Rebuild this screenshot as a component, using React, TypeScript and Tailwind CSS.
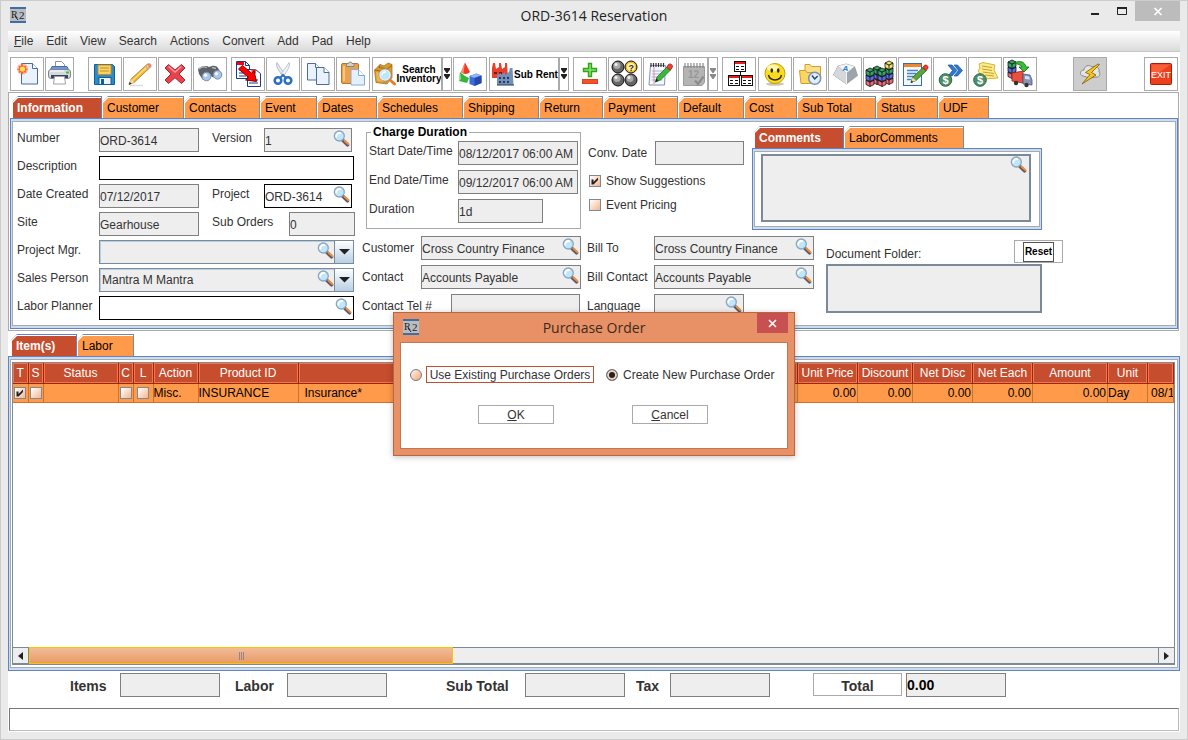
import { useState, type ReactNode } from 'react'

const MENUS = ['File', 'Edit', 'View', 'Search', 'Actions', 'Convert', 'Add', 'Pad', 'Help']

const MAIN_TABS = [
  { label: 'Information', width: 'w-[90px]' },
  { label: 'Customer', width: 'w-[82px]' },
  { label: 'Contacts', width: 'w-[76px]' },
  { label: 'Event', width: 'w-[57px]' },
  { label: 'Dates', width: 'w-[60px]' },
  { label: 'Schedules', width: 'w-[86px]' },
  { label: 'Shipping', width: 'w-[76px]' },
  { label: 'Return', width: 'w-[64px]' },
  { label: 'Payment', width: 'w-[75px]' },
  { label: 'Default', width: 'w-[66px]' },
  { label: 'Cost', width: 'w-[53px]' },
  { label: 'Sub Total', width: 'w-[79px]' },
  { label: 'Status', width: 'w-[62px]' },
  { label: 'UDF', width: 'w-[51px]' },
]

const COLUMNS = [
  { label: 'T', width: 'w-[15px]' },
  { label: 'S', width: 'w-[15px]' },
  { label: 'Status', width: 'w-[75px]' },
  { label: 'C', width: 'w-[15px]' },
  { label: 'L', width: 'w-[20px]' },
  { label: 'Action', width: 'w-[45px]' },
  { label: 'Product ID', width: 'w-[100px]' },
  { label: '', width: '' },
  { label: 'Unit Price', width: 'w-[60px]' },
  { label: 'Discount', width: 'w-[55px]' },
  { label: 'Net Disc', width: 'w-[60px]' },
  { label: 'Net Each', width: 'w-[60px]' },
  { label: 'Amount', width: 'w-[75px]' },
  { label: 'Unit', width: 'w-[40px]' },
  { label: '', width: 'w-[26px]' },
]

/* ---------- icons ---------- */

function Icon({ w = 32, children }: { w?: number; children: ReactNode }) {
  return (
    <svg width={w} height={32} viewBox={`0 0 ${w} 32`} fill="none" className="shrink-0" aria-hidden="true">
      {children}
    </svg>
  )
}

function R2Logo() {
  return (
    <svg width={16} height={16} viewBox="0 0 16 16" className="shrink-0" aria-hidden="true">
      <rect width="16" height="16" fill="#b9bcc0" />
      <rect width="16" height="2" fill="#3c6fa6" />
      <rect y="14" width="16" height="2" fill="#3c6fa6" />
      <text x="1" y="11" fontSize="10" fontFamily="Liberation Serif, serif" fill="#1c1c1c">R</text>
      <text x="9" y="12" fontSize="11" fontFamily="Liberation Serif, serif" fill="#1c1c1c">2</text>
      <path d="M5 9l3 4" stroke="#1c1c1c" strokeWidth="1" />
    </svg>
  )
}

function Magnifier() {
  return (
    <svg width={17} height={17} viewBox="0 0 17 17" fill="none" aria-hidden="true">
      <path d="M10 10.5l4.500 4.300" stroke="#5f5a6e" strokeWidth="3.600" strokeLinecap="round" />
      <path d="M11.500 10.500l3.800 3.600" stroke="#f0913a" strokeWidth="2" strokeLinecap="round" />
      <circle cx="6.300" cy="6" r="5" fill="#bfe6fb" stroke="#8ea6bd" strokeWidth="1.300" />
      <path d="M3.300 6.500a3.200 3.200 0 0 1 4-3.400" stroke="#fff" strokeWidth="1.800" strokeLinecap="round" />
    </svg>
  )
}

const Page = ({ d }: { d: string }) => <path d={d} fill="#e9f2fd" stroke="#4a6ba3" strokeWidth="1" />

const NewIcon = () => (
  <Icon>
    <Page d="M10.5 5.5h11l5 5v15.500h-16z" />
    <path d="M21.500 5.500v5h5" fill="#fff" stroke="#4a6ba3" />
    <circle cx="11.500" cy="11" r="5.500" fill="#ff8a5c" opacity=".55" />
    <path d="M11.500 6l1.200 2.600 2.800-1-1 2.800 2.600.8-2.600 1.200 1 2.600-2.800-.9-1.200 2.500-1.200-2.500-2.800.9 1-2.600-2.600-1.200 2.600-.8L7.500 7.600l2.800 1z" fill="#f5622a" />
    <circle cx="11.500" cy="11" r="2.600" fill="#ffe34a" />
  </Icon>
)

const PrintIcon = () => (
  <Icon w={27}>
    <path d="M9.500 10V3.500h6l3 3V10z" fill="#fff" stroke="#8a93a3" />
    <path d="M6 8.500h15l2 4H4z" fill="#6f98d6" stroke="#4a6aa0" />
    <rect x="2.500" y="11.500" width="22" height="9" rx="2.500" fill="#d5d9e0" stroke="#7d8594" />
    <path d="M5 17h17v3H5z" fill="#3d4452" />
    <path d="M8.500 18.500h10l1 7.500h-12z" fill="#fff" stroke="#9aa2af" />
    <path d="M20 14.500h3" stroke="#39c629" strokeWidth="2" />
    <path d="M4 13h14" stroke="#fff" />
  </Icon>
)

const SaveIcon = () => (
  <Icon>
    <path d="M5.500 6.500h18l2 2v18h-20z" fill="#2a8ccd" stroke="#125d9b" />
    <rect x="9" y="7" width="13" height="9.500" fill="#fbd266" stroke="#c98d1c" />
    <path d="M11 10h9M11 13h9" stroke="#c98d1c" />
    <rect x="10" y="19.500" width="12" height="7" fill="#eef3f8" stroke="#125d9b" />
    <rect x="12" y="21" width="3" height="5" fill="#125d9b" />
  </Icon>
)

const PencilIcon = () => (
  <Icon>
    <path d="M6 27.500h13" stroke="#ddd" strokeWidth="1.500" />
    <path d="M5 26.500l2-5.500L23.500 6l3 3L10 24.500z" fill="#fbb62b" stroke="#a4722c" strokeWidth=".8" />
    <path d="M8.500 22.500L24.500 7.500" stroke="#ffe38a" strokeWidth="1.300" />
    <path d="M5 26.500l2-5.500 3 3.500z" fill="#f5dab4" />
    <path d="M4.800 26.800l1-2.800 1.800 1.800z" fill="#222" />
    <path d="M23 6.500l1-1c1.500-1 4.500 1.500 3.300 3.200l-1 1z" fill="#ee8474" />
    <path d="M21.500 8l3 3" stroke="#b5b5b5" strokeWidth="1.600" />
  </Icon>
)

const DeleteIcon = () => (
  <Icon>
    <path d="M9.500 6.500l6.500 5.500 6.500-5.500 3.500 3.500-6 6 6 6-3.500 3.500-6.500-5.800-6.500 5.800L6 22l6-6-6-6z" fill="#e8424d" stroke="#b3202c" strokeLinejoin="round" />
    <path d="M9.500 8.500l6.500 5.500 6.500-5.500" stroke="#ff9aa0" strokeWidth="1.500" />
  </Icon>
)

const BinocularsIcon = () => (
  <Icon>
    <path d="M4 11c1-2 5-3.500 9-3l2 1 3-1c3-.5 5 .5 6 2l4 7-4 3-6-1-2-3-2 5-5 1-4-6z" fill="#5d6167" />
    <path d="M5 11c2-2 5-2.500 8-1.500M18 9.500l4 1" stroke="#b4b8bd" strokeWidth="1.300" />
    <circle cx="12.500" cy="18.500" r="4.300" fill="#a5c8f0" stroke="#7d8da2" />
    <circle cx="23.500" cy="16.800" r="4.300" fill="#a5c8f0" stroke="#7d8da2" />
    <circle cx="11.500" cy="17.300" r="1.700" fill="#f2f8ff" />
    <circle cx="22.500" cy="15.700" r="1.700" fill="#f2f8ff" />
  </Icon>
)

const TransferIcon = () => (
  <Icon>
    <path d="M4.500 3.500h9l4 4v13h-13z" fill="#fff" stroke="#173a8c" />
    <path d="M13.500 3.500v4h4" stroke="#173a8c" />
    <path d="M5 4h7v3H5z" fill="#f00" />
    <path d="M7 12h4M7 15h5M7 18h7" stroke="#173a8c" />
    <path d="M15.500 11.500h8l5 4v13h-13z" fill="#fff" stroke="#173a8c" />
    <path d="M19 11.500h5v4h-4z" fill="#f44" />
    <path d="M17 19h3M17 22h9M17 25h9" stroke="#173a8c" />
    <path d="M6.500 11l4-3.500 9.500 8 2-3 2.500 11-11-1.500 3-2.500z" fill="#f00" stroke="#600" strokeWidth=".9" />
  </Icon>
)

const CutIcon = () => (
  <Icon>
    <path d="M10 4.500c-2 3 2 9 6 14l2-2.500C15 12 12 8 10 4.500z" fill="#e3e6ea" stroke="#aeb4bb" strokeWidth=".8" />
    <path d="M22 4.500c2 3-2 9-6 14l-2-2.500c3-4 6-8 8-11.500z" fill="#f3f4f6" stroke="#aeb4bb" strokeWidth=".8" />
    <circle cx="11" cy="22.500" r="3.300" stroke="#2d6fc2" strokeWidth="2.600" />
    <circle cx="21" cy="22.500" r="3.300" stroke="#2d6fc2" strokeWidth="2.600" />
    <path d="M13 20l3-3 3 3" stroke="#2d6fc2" strokeWidth="2" />
  </Icon>
)

const CopyIcon = () => (
  <Icon>
    <Page d="M5.500 5.500h8l4 4v12.500h-12z" />
    <path d="M13.500 5.500v4h4" fill="#fff" stroke="#4a6ba3" />
    <Page d="M14.500 9.500h7.500l5 5v12h-12.500z" />
    <path d="M22 9.500v5h5" fill="#fff" stroke="#4a6ba3" />
  </Icon>
)

const PasteIcon = () => (
  <Icon>
    <rect x="4.500" y="5.500" width="17" height="20" rx="1.500" fill="#eda24a" stroke="#b8752a" />
    <path d="M7 8v15" stroke="#f8c888" strokeWidth="2" />
    <path d="M9.500 8.500v-3h2c0-2 3.500-2 3.500 0h2v3z" fill="#d5d2cd" stroke="#86827c" />
    <path d="M14 11.500h7.500l6 6v9.500H14z" fill="#e4f1fd" stroke="#86abd8" />
    <path d="M21.500 11.500v6h6" fill="#fff" stroke="#86abd8" />
  </Icon>
)

const InventoryIcon = () => (
  <Icon w={24}>
    <path d="M1.500 12L7 6.500l4 1.500 4-3 4 1.500v13L14 26l-11-1.500z" fill="#d99a2b" stroke="#a8721c" strokeWidth=".8" />
    <path d="M1.500 12l9 1.500 8.500-6M7 6.500l-1 3 6 1" stroke="#8f5d12" strokeWidth=".8" />
    <path d="M3 14l7 1v9l-6-1z" fill="#f0b94a" />
    <path d="M16 21l5.500 5" stroke="#ec7a2c" strokeWidth="3" strokeLinecap="round" />
    <circle cx="12" cy="17" r="5.300" fill="#bde7f6" stroke="#e8eef2" strokeWidth="1.600" />
    <circle cx="12" cy="17" r="6.200" stroke="#7d97a8" strokeWidth=".7" />
    <path d="M9 17.500a3.300 3.300 0 0 1 4-3.500" stroke="#fff" strokeWidth="1.600" />
  </Icon>
)

const ShapesIcon = () => (
  <Icon>
    <path d="M11 4.500l5 9.500c-2 2.500-7 2.500-9 0z" fill="#ee3a22" />
    <path d="M11 4.500L9.500 15c-1 0-2-.5-2.500-1z" fill="#ff9076" />
    <path d="M6 14l5 4 4 2-2 5-8-2z" fill="#35b53a" />
    <path d="M6 14l1 7-2 2z" fill="#9be39a" />
    <path d="M15.500 18l7-2.500 5 2v7.500l-7 3-5-2z" fill="#3a6cdb" />
    <path d="M15.500 18l7-2.500 5 2-7 2.500z" fill="#8fb2ff" />
    <path d="M20.500 20v8l7-3v-7.500z" fill="#2449a8" />
  </Icon>
)

const FactoryIcon = () => (
  <Icon w={24}>
    <path d="M2 20V10l1-5h2l1 6 3-2 0-4h2l1 6 3-2V5h2l1 15z" fill="#e8402a" />
    <path d="M4 15h3M9 15h3" stroke="#7d1709" strokeWidth="2" />
    <path d="M7 27V17l4-2v2l4-3v3l4-3 1-4h2.500l1 17z" fill="#7391b8" />
    <path d="M9 20h2M13 20h2M17 20h2M9 24h2M13 24h2M17 24h2" stroke="#24395a" strokeWidth="2" />
    <path d="M7 27h17" stroke="#24395a" />
  </Icon>
)

const PlusMinusIcon = () => (
  <Icon>
    <path d="M14.500 5.500h3v5h5v3h-5v5h-3v-5h-5v-3h5z" fill="#8be06c" stroke="#2fa51b" strokeWidth="1.400" />
    <rect x="8.500" y="21.500" width="15" height="4" fill="#f4512b" stroke="#e0401c" />
  </Icon>
)

const BallsIcon = () => (
  <Icon>
    {[[9, 9], [9, 22], [22, 22]].map(([x, y]) => (
      <g key={`${x}-${y}`}>
        <circle cx={x} cy={y} r="6" fill="#666" stroke="#111" />
        <circle cx={x - 1} cy={y - 1.5} r="3.500" fill="#a9a9a9" />
        <circle cx={x - 2} cy={y - 2.5} r="1.600" fill="#eee" />
      </g>
    ))}
    <circle cx="22" cy="9" r="6" fill="#f3b91e" stroke="#111" />
    <circle cx="22" cy="9" r="4" fill="#fff0b0" />
    <text x="19.500" y="12.500" fontSize="9" fontWeight="bold" fontFamily="Liberation Sans, sans-serif" fill="#333">?</text>
  </Icon>
)

const NoteIcon = () => (
  <Icon>
    <path d="M6.500 7.500h15l-1 19.500H5z" fill="#f5f8ff" stroke="#8193b8" />
    <path d="M8 13h12M8 16h11M7.500 19h12M7.500 22h11" stroke="#9fb4e0" />
    <path d="M10 9v17" stroke="#f08a8a" />
    <path d="M7 5v4M9.500 5v4M12 5v4M14.500 5v4M17 5v4M19.500 5v4" stroke="#333" strokeWidth="1.200" />
    <path d="M11.500 24l1.500-5L23 9l3.500 3-10 10z" fill="#3fb53a" stroke="#1d7a1a" strokeWidth=".8" />
    <path d="M22.500 9.500l2-3c2-1.500 4.500.5 4 2.500L26.500 12z" fill="#ef3d34" stroke="#a81b14" strokeWidth=".8" />
    <path d="M11 24.500l1.500-4 2 2z" fill="#222" />
  </Icon>
)

const CalendarIcon = () => (
  <Icon w={27}>
    <path d="M3.500 8.500h21v16l-2.500 3h-18.500z" fill="#b4b4b4" stroke="#9c9c9c" />
    <path d="M5 5v5M8 5v5M11 5v5M14 5v5M17 5v5M20 5v5M23 5v5" stroke="#888" strokeWidth="1.200" />
    <text x="8" y="20" fontSize="10" fontWeight="bold" fontFamily="Liberation Sans, sans-serif" fill="#989898">12</text>
    <path d="M15 22.500l3 3.500 5.500-7.500" stroke="#8c8c8c" strokeWidth="2.200" />
  </Icon>
)

const OrgIcon = () => (
  <Icon>
    <path d="M17.500 14v3M10.500 17.500h13M10.500 17v2M23.500 17v2" stroke="#111" />
    {[[11, 3], [5, 17], [18, 17]].map(([x, y]) => (
      <g key={x}>
        <rect x={x + 0.5} y={y + 0.5} width="11" height="10" fill="#fff" stroke="#111" />
        <rect x={x + 1} y={y + 1} width="10" height="2" fill="#ee1c1c" />
        <path d={`M${x + 2} ${y + 5.5}h3M${x + 7} ${y + 5.5}h3M${x + 2} ${y + 8.5}h3M${x + 7} ${y + 8.5}h3`} stroke="#111" />
      </g>
    ))}
  </Icon>
)

const SmileIcon = () => (
  <Icon>
    <ellipse cx="16" cy="26" rx="9" ry="1.800" fill="#c9c9b0" />
    <circle cx="16" cy="15.500" r="10" fill="#f9dc20" stroke="#c59a0a" />
    <ellipse cx="14" cy="10" rx="6" ry="3.500" fill="#fff8a8" />
    <ellipse cx="12.800" cy="12.500" rx="1.300" ry="2.300" fill="#3b2a00" />
    <ellipse cx="19.200" cy="12.500" rx="1.300" ry="2.300" fill="#3b2a00" />
    <path d="M9.500 17c1.500 6.500 11.500 6.500 13 0" stroke="#3b2a00" strokeWidth="1.500" />
  </Icon>
)

const FolderClockIcon = () => (
  <Icon>
    <path d="M11 9V6.500h5l1.500 2h9V22H11z" fill="#fbe08b" stroke="#d59b27" />
    <path d="M5.500 12.500h6l1.500 2h8v11h-14z" fill="#fcd665" stroke="#d59b27" />
    <circle cx="20.700" cy="20.300" r="6" fill="#dff0fc" stroke="#7c93ad" strokeWidth="1.600" />
    <path d="M18 17.500l2.700 3.500 3-3" stroke="#24426e" strokeWidth="1.400" />
  </Icon>
)

const KeyIcon = () => (
  <Icon>
    <path d="M4.500 17L9 8l8-2 8.500 2.500 3 9L17.500 26z" fill="#9ea4ac" stroke="#8a9099" strokeWidth=".7" />
    <path d="M9 8l8-2 8.500 2.500-8 6.500z" fill="#f4f6f8" />
    <path d="M4.500 17L9 8l8.500 7v11z" fill="#d4d8dd" />
    <path d="M17.500 15v11" stroke="#f4f6f8" />
    <text x="13.500" y="13" fontSize="8" fontWeight="bold" fontStyle="italic" fontFamily="Liberation Sans, sans-serif" fill="#2a7fd4">A</text>
  </Icon>
)

// columns of crates, drawn from the bottom one up
const Stack = ({ x, y, layers }: { x: number; y: number; layers: string[] }) => (
  <g stroke="#111" strokeWidth=".8" strokeLinejoin="round">
    {layers.map((c, i) => {
      const top = y - i * 5
      return (
        <g key={i} fill={c}>
          <path d={`M${x} ${top}l4 2 4-2v4.500l-4 2-4-2z`} />
          <path d={`M${x} ${top}l4-2 4 2-4 2z`} />
          <path d={`M${x + 4} ${top + 2}v4.500`} />
        </g>
      )
    })}
  </g>
)

const RED = '#ee6b78'
const BLUE = '#5a6fe8'
const GREEN = '#35a868'
const YELLOW = '#f5e06a'

const BlocksIcon = () => (
  <Icon>
    <Stack x={9} y={20} layers={[RED, BLUE, GREEN]} />
    <Stack x={21} y={20} layers={[RED, BLUE, GREEN, YELLOW]} />
    <Stack x={2} y={22} layers={[RED, BLUE, GREEN]} />
    <Stack x={14} y={22} layers={[RED, BLUE, GREEN]} />
  </Icon>
)

const EditDocIcon = () => (
  <Icon>
    <rect x="4.500" y="5.500" width="18" height="22" fill="#f4f9fe" stroke="#2f6fb3" />
    <path d="M5 6h17v3H5z" fill="#f2862a" />
    <path d="M8 12.500h11M8 15.500h9M8 18.500h7M8 21.500h4" stroke="#4585c6" strokeWidth="1.400" />
    <path d="M12 24.500l1.500-5L24 9.500l3.500 3L17 22.500z" fill="#5aa83c" stroke="#2b5d18" strokeWidth=".8" />
    <path d="M23.500 9.800l2-2.500c2-1 4 .8 3.500 2.700l-1.800 2.500z" fill="#ee3d34" stroke="#a81b14" strokeWidth=".8" />
    <path d="M12 24.500l1.500-5L17 22.500z" fill="#f3d9ae" />
    <path d="M11.800 25l.8-2.400 1.600 1.500z" fill="#111" />
  </Icon>
)

const Coin = ({ x, y }: { x: number; y: number }) => (
  <g>
    <circle cx={x} cy={y} r="6.300" fill="#4f8e68" stroke="#2f6848" />
    <text x={x - 3} y={y + 4} fontSize="11" fontWeight="bold" fontFamily="Liberation Sans, sans-serif" fill="#fff">$</text>
  </g>
)

const MoneyArrowIcon = () => (
  <Icon>
    <path d="M14 7h4l5 5.500-5 5.500h-4l4.500-5.500z" fill="#2d78d0" stroke="#1b539b" strokeWidth=".7" />
    <path d="M20 7h3.500l5 5.500-5 5.500H20l4.500-5.500z" fill="#2d78d0" stroke="#1b539b" strokeWidth=".7" />
    <Coin x={11.5} y={22} />
  </Icon>
)

const MoneyNoteIcon = () => (
  <Icon>
    <path d="M10 6l4-1.500 12 2.500-1 5 4 8-14 1-6-8 2-3z" fill="#fbeb8a" stroke="#d5b53a" />
    <path d="M13 8l10 1.500M13 11l10 1.500M14 14l11 1.500M16 17l9 1" stroke="#c7a02b" />
    <Coin x={11} y={22} />
  </Icon>
)

const TruckIcon = () => (
  <Icon>
    <Stack x={4} y={14} layers={[RED, BLUE, GREEN]} />
    <path d="M10 5c6-3 11-1 12 4h3l-5 5-5-5h3c-1-2-4-3-8-4z" fill="#35c135" stroke="#136813" strokeWidth=".8" />
    <path d="M8 15l11-2v12l-11-2z" fill="#e8503f" stroke="#9c2318" strokeWidth=".8" />
    <path d="M19 16l7 1 2 5v5l-9-1z" fill="#8893b6" stroke="#4d5678" strokeWidth=".8" />
    <path d="M21 18l4 .5 1 3-5-.5z" fill="#d7e4f5" />
    <circle cx="12" cy="25" r="2.200" fill="#333" />
    <circle cx="22.500" cy="27" r="2.200" fill="#333" />
  </Icon>
)

const LightningIcon = () => (
  <Icon>
    <path d="M9 18c-4-1-3-6 1-6 0-4 5-6 8-3 4-2 8 1 7 5 2 2 0 6-3 5l-6 1z" fill="#e4e4e2" stroke="#888" />
    <path d="M24 6L11.500 14.500l4.500 2L8 26l14-9-4.500-2.500 8-8z" fill="#f8c51e" stroke="#7d5a00" strokeWidth=".8" />
  </Icon>
)

const ExitIcon = () => (
  <Icon>
    <rect x="5.500" y="5.500" width="21" height="21" rx="1" fill="#ee3f1c" stroke="#a81d08" />
    <path d="M6.500 6.500h19L6.500 20z" fill="#f65f3a" />
    <text x="16" y="19.500" textAnchor="middle" fontSize="9" fontWeight="normal" fontFamily="Liberation Sans, sans-serif" fill="#fff">EXIT</text>
  </Icon>
)

/* ---------- controls ---------- */

function ToolButton({ label, width = 'w-[34px]', active, children }: { label?: string; width?: string; active?: boolean; children: ReactNode }) {
  return (
    <button
      type="button"
      aria-label={label}
      className={`flex h-[34px] shrink-0 items-center justify-center overflow-hidden border border-[#aaa] ${active ? 'bg-[#cdcdcd]' : 'bg-white'} ${width}`}
    >
      {children}
    </button>
  )
}

function DropArrow({ label, dim }: { label: string; dim?: boolean }) {
  return (
    <ToolButton label={label} width="w-[10px]">
      <svg width="8" height="12" viewBox="0 0 8 12" fill={dim ? '#8a8a8a' : '#222'} className="shrink-0" aria-hidden="true">
        <path d="M1 0h6v1.500L4.500 5h-1L1 1.500zM1 6h6v1.500L4.500 11h-1L1 7.500z" />
      </svg>
    </ToolButton>
  )
}

function Tab({ label, width, selected, onClick }: { label: string; width: string; selected?: boolean; onClick?: () => void }) {
  return (
    <button
      type="button"
      role="tab"
      aria-selected={!!selected}
      onClick={onClick}
      className={`h-[22px] shrink-0 pt-px pr-px [clip-path:polygon(6px_0,100%_0,100%_100%,0_100%,0_6px)] ${selected ? 'bg-[#6382bf]' : 'bg-[#7a8a99]'} ${width}`}
    >
      <span className="block h-full bg-white pt-px pl-px">
        <span
          className={`block h-full pl-1 text-left leading-[21px] whitespace-nowrap [clip-path:polygon(5px_0,100%_0,100%_100%,0_100%,0_5px)] ${selected ? 'bg-[#c64d2d] font-bold text-white' : 'bg-[#ff9a4a] text-black'}`}
        >
          {label}
        </span>
      </span>
    </button>
  )
}

type FieldProps = {
  id: string
  label: string
  value?: string
  labelWidth: string
  width: string
  editable?: boolean
  search?: boolean
  centered?: boolean
}

function Field({ id, label, value = '', labelWidth, width, editable, search, centered }: FieldProps) {
  return (
    <div className="flex h-6 items-center">
      <label htmlFor={id} className={`shrink-0 whitespace-nowrap ${centered ? '' : 'pb-1'} ${labelWidth}`}>
        {label}
      </label>
      <div className={`relative h-6 shrink-0 ${width}`}>
        <input
          id={id}
          defaultValue={value}
          readOnly={!editable}
          className={`h-6 w-full border pt-0.5 outline-none ${editable ? 'border-black bg-white' : 'border-[#7f7f7f] bg-[#eee]'}`}
        />
        {search && (
          <button type="button" aria-label={`Find ${label}`} className="absolute top-0.5 right-0.5">
            <Magnifier />
          </button>
        )}
      </div>
    </div>
  )
}

function Combo({ id, label, value = '' }: { id: string; label: string; value?: string }) {
  return (
    <div className="flex h-6 items-center">
      <label htmlFor={id} className="w-[82px] shrink-0 pb-1">
        {label}
      </label>
      <div className="relative h-6 w-[255px]">
        <select id={id} className="h-6 w-full appearance-none border border-[#7a8a99] bg-[#eee] pl-0.5 shadow-[inset_1px_1px_0_#b8cfe5]">
          <option>{value}</option>
        </select>
        <button type="button" aria-label={`Find ${label}`} className="absolute top-0.5 right-5">
          <Magnifier />
        </button>
        <span className="pointer-events-none absolute top-px right-px flex h-[22px] w-[19px] items-center justify-center border-l border-[#7a8a99] bg-gradient-to-b from-white to-[#b8cfe5]">
          <svg width="11" height="6" viewBox="0 0 11 6" aria-hidden="true">
            <path d="M0 0h11L5.500 5.500z" fill="#222" />
          </svg>
        </span>
      </div>
    </div>
  )
}

function Check({ id, checked, label }: { id: string; checked?: boolean; label?: string }) {
  return (
    <span className="relative block h-3 w-3 shrink-0">
      <input
        id={id}
        type="checkbox"
        aria-label={label}
        defaultChecked={checked}
        className="peer block h-3 w-3 appearance-none border border-[#7a8a99] bg-gradient-to-br from-white to-[#f3b58c]"
      />
      <svg viewBox="0 0 12 12" className="pointer-events-none absolute inset-0 hidden h-3 w-3 peer-checked:block" aria-hidden="true">
        <path d="M2.500 4.500h2v2.500l4.500-4.500v2.500L4.500 9.500h-2z" fill="#222" />
      </svg>
    </span>
  )
}

function Pane({ className = '', children }: { className?: string; children: ReactNode }) {
  return (
    <div className={`flex flex-col border border-[#6382bf] bg-[#c8ddf2] px-px py-0.5 ${className}`}>
      <div className="flex min-h-0 flex-1 flex-col border border-[#aaa] bg-white">{children}</div>
    </div>
  )
}

/* ---------- sections ---------- */

function TitleBar() {
  return (
    <header className="relative flex h-[30px] shrink-0 items-center justify-center">
      <div className="absolute top-1.5 left-0.5">
        <R2Logo />
      </div>
      <h1 className="font-['Open_Sans',sans-serif] text-sm text-[#222]">ORD-3614 Reservation</h1>
      <div className="absolute top-0 right-0 flex h-5 items-start">
        <button type="button" aria-label="Minimize" className="h-5 w-7">
          <svg width="28" height="20" viewBox="0 0 28 20" aria-hidden="true">
            <path d="M12 12h8v2h-8z" fill="#222" />
          </svg>
        </button>
        <button type="button" aria-label="Maximize" className="h-5 w-7">
          <svg width="28" height="20" viewBox="0 0 28 20" aria-hidden="true">
            <path d="M10.500 6.500h9v7h-9z" fill="none" stroke="#222" />
            <path d="M10 6h10v2H10z" fill="#222" />
          </svg>
        </button>
        <button type="button" aria-label="Close" className="h-5 w-[45px] bg-[#bcbcbc]">
          <svg width="44" height="20" viewBox="0 0 44 20" aria-hidden="true">
            <path d="M19.500 7l7 7M26.500 7l-7 7" stroke="#fff" strokeWidth="1.700" />
          </svg>
        </button>
      </div>
    </header>
  )
}

function Toolbar() {
  return (
    <div className="flex h-10 shrink-0 items-start gap-px pt-[5px] pr-0.5 pl-0.5 text-[10px] leading-[9px] font-bold text-black">
      <ToolButton label="New"><NewIcon /></ToolButton>
      <ToolButton label="Print" width="w-[29px]"><PrintIcon /></ToolButton>
      <div className="w-3 shrink-0" />
      <ToolButton label="Save"><SaveIcon /></ToolButton>
      <ToolButton label="Edit"><PencilIcon /></ToolButton>
      <ToolButton label="Delete"><DeleteIcon /></ToolButton>
      <ToolButton label="Find"><BinocularsIcon /></ToolButton>
      <div className="w-0.5 shrink-0" />
      <ToolButton label="Transfer"><TransferIcon /></ToolButton>
      <ToolButton label="Cut"><CutIcon /></ToolButton>
      <ToolButton label="Copy"><CopyIcon /></ToolButton>
      <ToolButton label="Paste"><PasteIcon /></ToolButton>
      <div />
      <div className="flex">
        <ToolButton width="w-[70px]">
          <InventoryIcon />
          <span className="text-center">Search<br />Inventory</span>
        </ToolButton>
        <DropArrow label="Search Inventory options" />
      </div>
      <ToolButton label="Shapes"><ShapesIcon /></ToolButton>
      <div />
      <div className="flex">
        <ToolButton width="w-[70px]">
          <FactoryIcon />
          <span className="whitespace-nowrap">Sub Rent</span>
        </ToolButton>
        <DropArrow label="Sub Rent options" />
      </div>
      <div className="w-0.5 shrink-0" />
      <ToolButton label="Add or remove"><PlusMinusIcon /></ToolButton>
      <ToolButton label="Availability"><BallsIcon /></ToolButton>
      <ToolButton label="Notes"><NoteIcon /></ToolButton>
      <div className="flex">
        <ToolButton label="Calendar" width="w-[30px]"><CalendarIcon /></ToolButton>
        <DropArrow label="Calendar options" dim />
      </div>
      <div className="w-0.5 shrink-0" />
      <ToolButton label="Hierarchy"><OrgIcon /></ToolButton>
      <div />
      <ToolButton label="Smile"><SmileIcon /></ToolButton>
      <ToolButton label="History"><FolderClockIcon /></ToolButton>
      <ToolButton label="Key"><KeyIcon /></ToolButton>
      <ToolButton label="Containers"><BlocksIcon /></ToolButton>
      <ToolButton label="Edit document"><EditDocIcon /></ToolButton>
      <ToolButton label="Payments"><MoneyArrowIcon /></ToolButton>
      <ToolButton label="Invoice"><MoneyNoteIcon /></ToolButton>
      <ToolButton label="Delivery"><TruckIcon /></ToolButton>
      <div className="w-[34px] shrink-0" />
      <ToolButton label="Quick action" active><LightningIcon /></ToolButton>
      <div className="flex-1" />
      <ToolButton label="Exit"><ExitIcon /></ToolButton>
    </div>
  )
}

function OrderFields() {
  return (
    <div className="flex w-[338px] shrink-0 flex-col gap-1 pt-1.5">
      <div className="flex gap-[13px]">
        <Field id="number" label="Number" value="ORD-3614" labelWidth="w-[82px]" width="w-[100px]" />
        <Field id="version" label="Version" value="1" labelWidth="w-[52px]" width="w-[88px]" search />
      </div>
      <Field id="description" label="Description" labelWidth="w-[82px]" width="w-[255px]" editable />
      <div className="flex gap-[13px]">
        <Field id="created" label="Date Created" value="07/12/2017" labelWidth="w-[82px]" width="w-[100px]" />
        <Field id="project" label="Project" value="ORD-3614" labelWidth="w-[52px]" width="w-[88px]" editable search />
      </div>
      <div className="flex gap-[13px]">
        <Field id="site" label="Site" value="Gearhouse" labelWidth="w-[82px]" width="w-[100px]" />
        <Field id="suborders" label="Sub Orders" value="0" labelWidth="w-[77px]" width="w-[66px]" />
      </div>
      <Combo id="manager" label="Project Mgr." />
      <Combo id="sales" label="Sales Person" value="Mantra M Mantra" />
      <Field id="planner" label="Labor Planner" labelWidth="w-[82px]" width="w-[255px]" editable search />
    </div>
  )
}

function CommentsBox() {
  const [tab, setTab] = useState('Comments')
  return (
    <div className="w-[290px] shrink-0 pt-1">
      <div role="tablist" className="flex pl-0.5">
        <Tab label="Comments" width="w-[90px]" selected={tab === 'Comments'} onClick={() => setTab('Comments')} />
        <Tab label="LaborComments" width="w-[120px]" selected={tab === 'LaborComments'} onClick={() => setTab('LaborComments')} />
      </div>
      <Pane className="h-[82px]">
        <div className="relative flex-1 pt-0.5 pr-2 pb-1 pl-1.5">
          <textarea aria-label={tab} className="block h-full w-full resize-none border-2 border-[#7a8a99] bg-[#eee]" />
          <button type="button" aria-label="Find comment" className="absolute top-1 right-3">
            <Magnifier />
          </button>
        </div>
      </Pane>
    </div>
  )
}

function InformationPane() {
  return (
    <Pane>
      <div className="flex items-start gap-[7px] pb-[5px] pl-1">
        <OrderFields />
        <div className="flex shrink-0 flex-col gap-1.5">
          <div className="flex items-start gap-[7px]">
            <fieldset className="mt-[3px] ml-1 flex w-[215px] flex-col gap-[5px] border border-[#aaa] pt-0.5 pb-[5px] pl-0.5">
              <legend className="ml-0.5 px-0.5 leading-[14px] font-bold text-black">Charge Duration</legend>
              <Field id="start" label="Start Date/Time" value="08/12/2017 06:00 AM" labelWidth="w-[89px]" width="w-[120px]" />
              <Field id="end" label="End Date/Time" value="09/12/2017 06:00 AM" labelWidth="w-[89px]" width="w-[120px]" />
              <Field id="duration" label="Duration" value="1d" labelWidth="w-[89px]" width="w-[85px]" />
            </fieldset>
            <div className="flex w-[157px] flex-col pt-[19px]">
              <Field id="conv" label="Conv. Date" labelWidth="w-[67px]" width="w-[89px]" centered />
              <div className="mt-2 ml-px flex h-4 items-center gap-[5px]">
                <Check id="suggest" checked />
                <label htmlFor="suggest">Show Suggestions</label>
              </div>
              <div className="mt-2 ml-px flex h-4 items-center gap-[5px]">
                <Check id="pricing" />
                <label htmlFor="pricing">Event Pricing</label>
              </div>
            </div>
            <CommentsBox />
          </div>
          <div className="flex items-start">
            <div className="flex w-[225px] flex-col gap-[5px]">
              <Field id="customer" label="Customer" value="Cross Country Finance" labelWidth="w-[59px]" width="w-[160px]" search centered />
              <Field id="contact" label="Contact" value="Accounts Payable" labelWidth="w-[59px]" width="w-[160px]" search centered />
              <Field id="tel" label="Contact Tel #" labelWidth="w-[89px]" width="w-[129px]" centered />
            </div>
            <div className="flex w-[239px] flex-col gap-[5px]">
              <Field id="billto" label="Bill To" value="Cross Country Finance" labelWidth="w-[67px]" width="w-[160px]" search centered />
              <Field id="billcontact" label="Bill Contact" value="Accounts Payable" labelWidth="w-[67px]" width="w-[160px]" search centered />
              <Field id="language" label="Language" labelWidth="w-[67px]" width="w-[90px]" search centered />
            </div>
            <div className="flex w-[237px] flex-col gap-px pt-1">
              <div className="flex items-end justify-between">
                <label htmlFor="folder" className="leading-[18px]">Document Folder:</label>
                <button type="button" className="flex h-[23px] w-[49px] items-center justify-center border border-[#aaa] bg-white">
                  <span className="border border-[#555] px-px text-[10px] leading-[18px] font-bold text-black">Reset</span>
                </button>
              </div>
              <textarea id="folder" className="block h-[49px] w-[216px] resize-none border-2 border-[#7a8a99] bg-[#eee]" />
            </div>
          </div>
        </div>
      </div>
    </Pane>
  )
}

const CELL = 'overflow-hidden border-r border-b border-[#c8742f] p-0 whitespace-nowrap'

function ItemsTable() {
  return (
    <table className="w-full table-fixed border-collapse text-black">
      <thead>
        <tr className="h-5 bg-[#c64d2d] text-white">
          {COLUMNS.map((c, i) => (
            <th
              key={i}
              scope="col"
              className={`border-r border-b border-[#8c2f18] p-0 text-center font-normal whitespace-nowrap shadow-[inset_1px_1px_0_#ff7044,inset_-1px_-1px_0_#ff7044] ${c.width}`}
            >
              {c.label}
            </th>
          ))}
        </tr>
      </thead>
      <tbody>
        <tr className="h-[19px] bg-[#ff9a4a]">
          <td className={CELL}><div className="pl-px"><Check id="row-t" label="T" checked /></div></td>
          <td className={CELL}><div className="pl-px"><Check id="row-s" label="S" /></div></td>
          <td className={CELL}></td>
          <td className={CELL}><div className="pl-px"><Check id="row-c" label="C" /></div></td>
          <td className={CELL}><div className="pl-[3px]"><Check id="row-l" label="L" /></div></td>
          <td className={CELL}>Misc.</td>
          <td className={CELL}>INSURANCE</td>
          <td className={CELL}><span className="pl-1.5">Insurance*</span></td>
          {[0, 1, 2, 3, 4].map((n) => (
            <td key={n} className={`${CELL} text-right`}><span className="pr-px">0.00</span></td>
          ))}
          <td className={CELL}>Day</td>
          <td className={CELL}><span className="pl-[3px]">08/1</span></td>
        </tr>
      </tbody>
    </table>
  )
}

function ScrollBar() {
  return (
    <div className="flex h-[17px] shrink-0 border-y border-[#7a8a99] bg-[#eee]">
      <button type="button" aria-label="Scroll left" className="flex w-4 items-center justify-center border-r border-[#7a8a99]">
        <svg width="5" height="8" viewBox="0 0 5 8" aria-hidden="true"><path d="M5 0v8L0 4z" fill="#222" /></svg>
      </button>
      <div className="flex flex-1">
        <div className="-my-px flex w-[424px] items-center justify-center gap-px border border-[#fbc400] bg-gradient-to-b from-[#f2bc97] to-[#e99a66]">
          <span className="h-2 w-px bg-[#8c8796]" />
          <span className="h-2 w-px bg-[#8c8796]" />
          <span className="h-2 w-px bg-[#8c8796]" />
        </div>
      </div>
      <button type="button" aria-label="Scroll right" className="flex w-4 items-center justify-center border-l border-[#7a8a99]">
        <svg width="5" height="8" viewBox="0 0 5 8" aria-hidden="true"><path d="M0 0v8l5-4z" fill="#222" /></svg>
      </button>
    </div>
  )
}

function Amount({ id, label, gap, labelWidth }: { id: string; label: string; gap: string; labelWidth: string }) {
  return (
    <div className={`flex items-center ${gap}`}>
      <label htmlFor={id} className={`pt-0.5 whitespace-nowrap ${labelWidth}`}>{label}</label>
      <input id={id} readOnly className="h-6 w-[100px] border border-[#7f7f7f] bg-[#eee]" />
    </div>
  )
}

function Totals() {
  return (
    <div className="mt-0.5 flex h-6 shrink-0 text-sm font-bold">
      <Amount id="sum-items" label="Items" gap="ml-[62px]" labelWidth="w-[50px]" />
      <Amount id="sum-labor" label="Labor" gap="ml-[15px]" labelWidth="w-[52px]" />
      <Amount id="sum-sub" label="Sub Total" gap="ml-[59px]" labelWidth="w-[79px]" />
      <Amount id="sum-tax" label="Tax" gap="ml-[11px]" labelWidth="w-[34px]" />
      <button type="button" className="ml-[43px] h-[23px] w-[89px] border border-[#aaa] bg-white pt-0.5">Total</button>
      <input aria-label="Total" readOnly value="0.00" className="ml-1 h-6 w-[100px] border border-[#7f7f7f] bg-[#eee] text-black" />
    </div>
  )
}

function PurchaseOrderDialog() {
  const [choice, setChoice] = useState('new')
  const radio =
    'block h-3 w-3 shrink-0 appearance-none rounded-full border border-[#6f7c88] bg-gradient-to-br from-[#fff3ea] to-[#f0a878] checked:shadow-[inset_0_0_0_2px_#f7d3ba] checked:bg-[#222] checked:bg-none'
  return (
    <div
      role="dialog"
      aria-labelledby="po-title"
      className="absolute top-[311px] left-1/2 w-[402px] -translate-x-1/2 border border-[#b9663f] bg-[#e99166] px-1.5 pb-1.5 shadow-[0_1px_6px_rgba(0,0,0,0.25)]"
    >
      <div className="relative flex h-[29px] items-center justify-center">
        <div className="absolute top-1.5 left-[3px]"><R2Logo /></div>
        <h2 id="po-title" className="font-['Open_Sans',sans-serif] text-sm text-[#3a2a20]">Purchase Order</h2>
        <button type="button" aria-label="Close dialog" className="absolute top-0 right-0 flex h-5 w-[31px] items-center justify-center bg-[#c75050]">
          <svg width="9" height="9" viewBox="0 0 9 9" aria-hidden="true">
            <path d="M1 1l7 7M8 1L1 8" stroke="#fff" strokeWidth="1.600" />
          </svg>
        </button>
      </div>
      <div className="h-[107px] border border-[#c8754f] bg-white pt-[23px]">
        <div className="flex items-center pl-[9px]">
          <input id="po-existing" type="radio" name="po" className={radio} checked={choice === 'existing'} onChange={() => setChoice('existing')} />
          <label htmlFor="po-existing" className="ml-1 w-[168px] border border-[#c64d2d] pt-px text-center leading-[14px] whitespace-nowrap">Use Existing Purchase Orders</label>
          <input id="po-new" type="radio" name="po" className={`ml-3 ${radio}`} checked={choice === 'new'} onChange={() => setChoice('new')} />
          <label htmlFor="po-new" className="ml-[5px] whitespace-nowrap">Create New Purchase Order</label>
        </div>
        <div className="mt-[22px] flex gap-[78px] pl-[77px]">
          <button type="button" className="h-[19px] w-[76px] border border-[#aaa] leading-[18px]"><u>O</u>K</button>
          <button type="button" className="h-[19px] w-[76px] border border-[#aaa] leading-[18px]"><u>C</u>ancel</button>
        </div>
      </div>
    </div>
  )
}

export default function App() {
  const [tab, setTab] = useState('Information')
  const [list, setList] = useState('Item(s)')
  return (
    <div className="relative flex min-h-screen flex-col overflow-hidden border border-[#ccc] bg-[#eaeaea] px-[7px] pb-[7px] font-['Liberation_Sans',Arial,sans-serif] text-xs text-[#333]">
      <TitleBar />
      <main className="flex flex-1 flex-col bg-white">
        <nav className="flex h-[21px] shrink-0 items-center gap-[13px] border-b border-[#c8c8c8] bg-gradient-to-b from-white to-[#dadada] pl-1.5">
          {MENUS.map((m) => (
            <button key={m} type="button">
              {m === 'File' ? <><u>F</u>ile</> : m}
            </button>
          ))}
        </nav>
        <Toolbar />
        <section className="mr-px shrink-0 border border-[#aaa] pt-[3px] pb-px pl-px">
          <div role="tablist" className="flex pl-0.5">
            {MAIN_TABS.map((t) => (
              <Tab key={t.label} label={t.label} width={t.width} selected={t.label === tab} onClick={() => setTab(t.label)} />
            ))}
          </div>
          <InformationPane />
        </section>
        <section className="mt-[3px] flex flex-1 flex-col">
          <div role="tablist" className="flex pl-[3px]">
            <Tab label="Item(s)" width="w-[66px]" selected={list === 'Item(s)'} onClick={() => setList('Item(s)')} />
            <Tab label="Labor" width="w-[57px]" selected={list === 'Labor'} onClick={() => setList('Labor')} />
          </div>
          <Pane className="flex-1">
            <div className="mt-0.5 mr-0.5 mb-0.5 ml-px flex flex-1 flex-col border border-[#7a8a99]">
              <div className="flex-1 overflow-hidden"><ItemsTable /></div>
              <ScrollBar />
            </div>
          </Pane>
        </section>
        <Totals />
        <div role="status" className="mx-px mt-[11px] mb-px h-[23px] shrink-0 border border-[#bbb] border-t-[#777] border-l-[#777] bg-white" />
      </main>
      <PurchaseOrderDialog />
    </div>
  )
}
